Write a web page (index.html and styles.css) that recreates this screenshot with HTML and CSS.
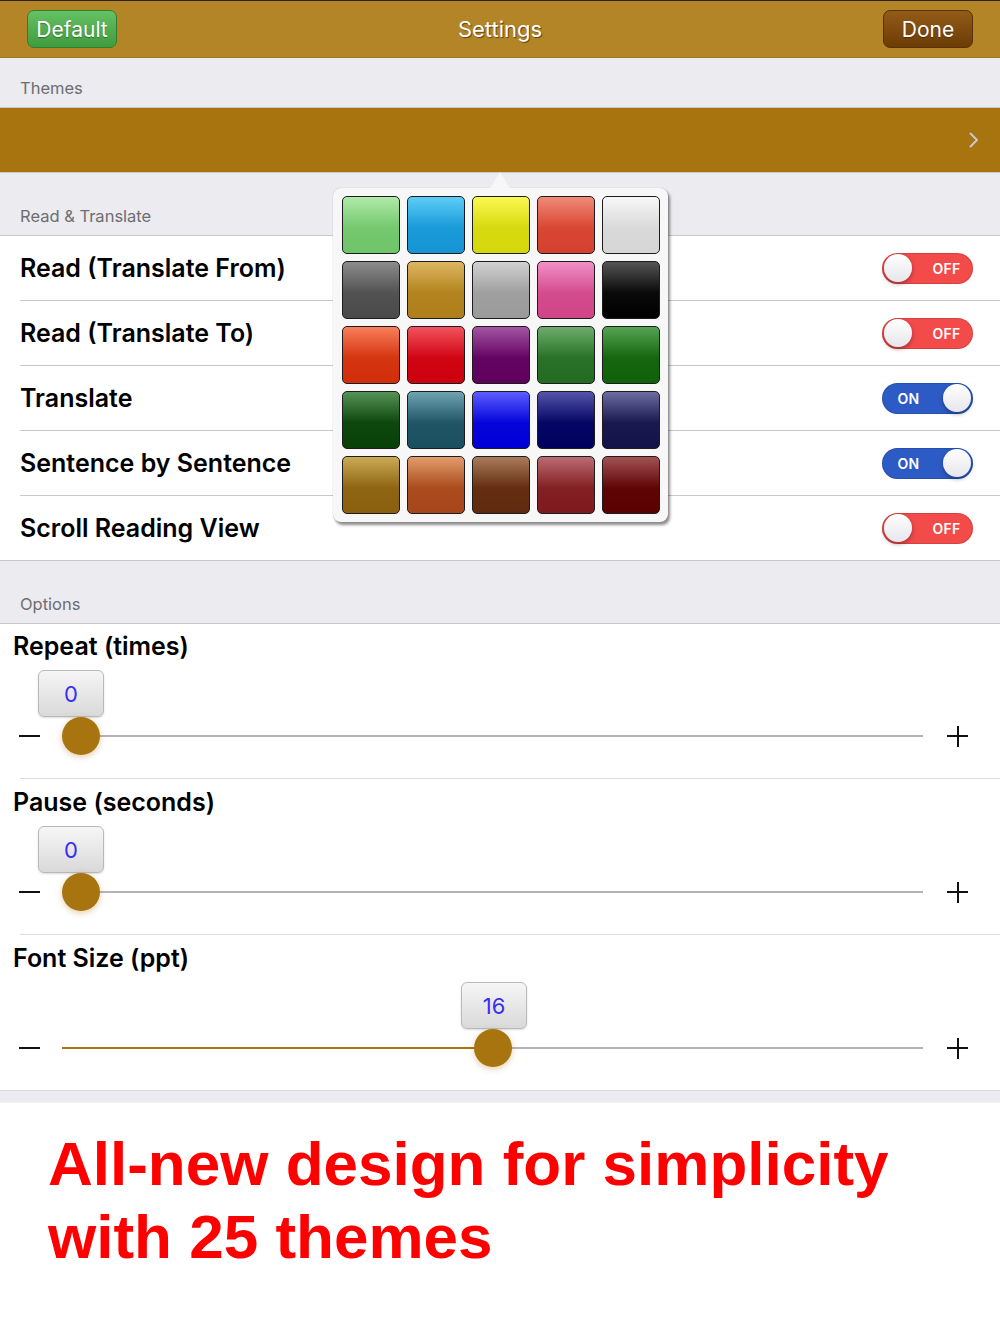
FILE: index.html
```html
<!DOCTYPE html>
<html lang="en">

<head>
  <meta charset="UTF-8">
  <title>Settings</title>
  <meta name="viewport" content="width=device-width, initial-scale=1">
  <link rel="stylesheet" href="styles.css">
</head>

<body>
  <header class="navbar">
    <button class="nav-btn btn-default">Default</button>
    <h1 class="nav-title">Settings</h1>
    <button class="nav-btn btn-done">Done</button>
  </header>

  <main class="settings">
    <div class="group-header">Themes</div>
    <div class="theme-row">
      <svg class="chevron" width="10" height="16" viewBox="0 0 10 16">
        <path d="M1.5 1.5 L8 8 L1.5 14.5" fill="none" stroke="#c9c9ce" stroke-width="2" stroke-linecap="round" stroke-linejoin="round"/>
      </svg>
    </div>

    <div class="group-header tall">Read &amp; Translate</div>
    <ul class="rows">
      <li class="row">
        <span class="row-label">Read (Translate From)</span>
        <span class="switch off"><span class="knob"></span><span class="switch-text">OFF</span></span>
      </li>
      <li class="row">
        <span class="row-label">Read (Translate To)</span>
        <span class="switch off"><span class="knob"></span><span class="switch-text">OFF</span></span>
      </li>
      <li class="row">
        <span class="row-label">Translate</span>
        <span class="switch on"><span class="knob"></span><span class="switch-text">ON</span></span>
      </li>
      <li class="row">
        <span class="row-label">Sentence by Sentence</span>
        <span class="switch on"><span class="knob"></span><span class="switch-text">ON</span></span>
      </li>
      <li class="row">
        <span class="row-label">Scroll Reading View</span>
        <span class="switch off"><span class="knob"></span><span class="switch-text">OFF</span></span>
      </li>
    </ul>

    <div class="group-header tall">Options</div>
    <div class="options">
      <div class="opt">
        <div class="opt-title">Repeat (times)</div>
        <div class="slider">
          <span class="minus"></span>
          <div class="track" style="--p: 0">
            <div class="fill"></div>
            <div class="bubble">0</div>
            <div class="thumb"></div>
          </div>
          <span class="plus"></span>
        </div>
      </div>
      <div class="opt">
        <div class="opt-title">Pause (seconds)</div>
        <div class="slider">
          <span class="minus"></span>
          <div class="track" style="--p: 0">
            <div class="fill"></div>
            <div class="bubble">0</div>
            <div class="thumb"></div>
          </div>
          <span class="plus"></span>
        </div>
      </div>
      <div class="opt last">
        <div class="opt-title">Font Size (ppt)</div>
        <div class="slider">
          <span class="minus"></span>
          <div class="track" style="--p: 0.5">
            <div class="fill"></div>
            <div class="bubble">16</div>
            <div class="thumb"></div>
          </div>
          <span class="plus"></span>
        </div>
      </div>
    </div>

    <div class="footer-band"></div>

    <p class="promo">All-new design for simplicity<br>with 25 themes</p>

    <div class="popover">
      <div class="swatches">
        <span class="swatch c-mint"></span>
        <span class="swatch c-sky"></span>
        <span class="swatch c-lemon"></span>
        <span class="swatch c-coral"></span>
        <span class="swatch c-white"></span>
        <span class="swatch c-graphite"></span>
        <span class="swatch c-gold"></span>
        <span class="swatch c-silver"></span>
        <span class="swatch c-pink"></span>
        <span class="swatch c-black"></span>
        <span class="swatch c-orange"></span>
        <span class="swatch c-red"></span>
        <span class="swatch c-purple"></span>
        <span class="swatch c-green"></span>
        <span class="swatch c-darkgreen"></span>
        <span class="swatch c-forest"></span>
        <span class="swatch c-teal"></span>
        <span class="swatch c-blue"></span>
        <span class="swatch c-navy"></span>
        <span class="swatch c-slate"></span>
        <span class="swatch c-olive"></span>
        <span class="swatch c-copper"></span>
        <span class="swatch c-brown"></span>
        <span class="swatch c-maroon"></span>
        <span class="swatch c-wine"></span>
      </div>
    </div>
  </main>
</body>

</html>
```

FILE: styles.css
```css
* {
  box-sizing: border-box;
}

html {
  font-family: Inter, Roboto, "Liberation Sans", Arial, sans-serif;
  -webkit-font-smoothing: antialiased;
}

body {
  margin: 0;
  width: 1000px;
  background: #fff;
  color: #000;
}

/* nav bar */

.navbar {
  height: 58px;
  border-top: 1px solid #2a2418;
  border-bottom: 1px solid #a07720;
  background: #b38526;
  display: flex;
  align-items: center;
  justify-content: space-between;
  padding: 0 27px;
  position: relative;
}

.nav-title {
  position: absolute;
  left: 0;
  right: 0;
  margin: 0;
  text-align: center;
  font-size: 22px;
  font-weight: 400;
  color: #fff;
  text-shadow: 1px 1px 1px rgba(60, 40, 0, 0.7);
  pointer-events: none;
}

.nav-btn {
  width: 90px;
  height: 38px;
  border-radius: 7px;
  font-family: inherit;
  font-size: 21px;
  color: #fff;
  padding: 0;
  text-shadow: 0 1px 1px rgba(0, 0, 0, 0.35);
  cursor: pointer;
}

.btn-default {
  background: linear-gradient(#66c064, #3f9c3e);
  border: 1px solid #2f7f2e;
}

.btn-done {
  background: linear-gradient(#925b17, #6c3c06);
  border: 1px solid #5b3206;
}

/* groups */

.settings {
  position: relative;
}

.group-header {
  height: 50px;
  background: #ebebf0;
  color: #6d6d72;
  font-size: 16.5px;
  line-height: 20px;
  padding: 0 20px 9px;
  display: flex;
  align-items: flex-end;
  border-bottom: 1px solid #c8c7cc;
}

.group-header.tall {
  height: 63px;
}

.theme-row {
  height: 65px;
  background: #a8740f;
  border-bottom: 1px solid #c8c7cc;
  display: flex;
  align-items: center;
  justify-content: flex-end;
  padding-right: 21px;
}

.rows {
  list-style: none;
  margin: 0;
  padding: 0 0 0 20px;
  border-bottom: 1px solid #c8c7cc;
}

.row {
  height: 65px;
  display: flex;
  align-items: center;
  justify-content: space-between;
  padding-right: 27px;
  border-bottom: 1px solid #c8c7cc;
}

.row:last-child {
  height: 64px;
  border-bottom: 0;
}

.row-label {
  font-size: 25px;
  font-weight: 600;
}

/* switches */

.switch {
  width: 91px;
  height: 31px;
  border-radius: 16px;
  display: flex;
  align-items: center;
  padding: 0 2px;
  box-shadow: inset 0 0 0 1px rgba(0, 0, 0, 0.12);
}

.switch.off {
  background: #f34a4a;
}

.switch.on {
  background: #2c5bc6;
  flex-direction: row-reverse;
}

.knob {
  width: 28px;
  height: 28px;
  border-radius: 50%;
  background: linear-gradient(#ffffff, #e6e6ec);
  box-shadow: 0 2px 4px rgba(0, 0, 0, 0.35);
  flex: none;
}

.switch-text {
  flex: 1;
  text-align: center;
  font-size: 14px;
  font-weight: 600;
  color: #fff;
  letter-spacing: 0.3px;
}

.switch.off .switch-text {
  padding-left: 10px;
}

.switch.on .switch-text {
  padding-right: 10px;
}

/* options */

.opt {
  padding: 9px 0 23px;
  margin-left: 20px;
  border-bottom: 1px solid #dcdce0;
}

.opt:first-child {
  padding-top: 8px;
}

.opt.last {
  border-bottom: 0;
}

.opt-title {
  margin-left: -7px;
  font-size: 25px;
  line-height: 28px;
  font-weight: 600;
}

.slider {
  margin: 10px 0 0 -1px;
  padding-top: 47px;
  display: flex;
  align-items: center;
}

.minus {
  width: 21px;
  height: 2.5px;
  background: #111;
  margin-right: 22px;
}

.plus {
  width: 21px;
  height: 21px;
  margin: 0 32px 0 24px;
  background:
    linear-gradient(#111, #111) center / 21px 2px no-repeat,
    linear-gradient(#111, #111) center / 2px 21px no-repeat;
}

.track {
  flex: 1;
  height: 38px;
  position: relative;
}

.track::before {
  content: "";
  position: absolute;
  left: 0;
  right: 0;
  top: 18px;
  height: 2px;
  background: #b4b4b4;
}

.fill {
  position: absolute;
  left: 0;
  top: 18px;
  height: 2px;
  width: calc(19px + var(--p) * (100% - 38px));
  background: #a8740f;
}

.thumb {
  position: absolute;
  top: 0;
  left: calc(var(--p) * (100% - 38px));
  width: 38px;
  height: 38px;
  border-radius: 50%;
  background: #a8740f;
  box-shadow: 0 2px 6px rgba(168, 116, 15, 0.35);
}

.bubble {
  position: absolute;
  left: calc(-24px + var(--p) * (100% - 15px));
  bottom: 100%;
  width: 66px;
  height: 47px;
  border: 1px solid #b9b9b9;
  border-radius: 6px;
  background: linear-gradient(#f6f6f6, #d9d9d9);
  box-shadow: 0 1px 2px rgba(0, 0, 0, 0.15);
  color: #3a2df2;
  font-size: 22px;
  display: flex;
  align-items: center;
  justify-content: center;
}

.footer-band {
  height: 13px;
  background: #ebebf0;
  border-top: 1px solid #d9d9de;
  border-bottom: 1px solid #f2f2f4;
}

.promo {
  margin: 0;
  padding: 24px 48px 0;
  font-family: "Liberation Sans", Arial, sans-serif;
  font-weight: 700;
  font-size: 62px;
  line-height: 73px;
  color: #ff0000;
}

/* theme popover */

.popover {
  position: absolute;
  top: 130px;
  left: 333px;
  width: 335px;
  padding: 8px 8px 8px 9px;
  background: #f7f7f8;
  border-radius: 8px;
  box-shadow: 2px 3px 3px rgba(0, 0, 0, 0.45), 0 0 1px rgba(0, 0, 0, 0.3);
}

.popover::before {
  content: "";
  position: absolute;
  top: -16px;
  left: 157px;
  border-left: 10px solid transparent;
  border-right: 10px solid transparent;
  border-bottom: 16px solid #f7f7f8;
}

.swatches {
  display: grid;
  grid-template-columns: repeat(5, 58px);
  grid-auto-rows: 58px;
  gap: 7px;
}

.swatch {
  border: 1px solid #1c1c1c;
  border-radius: 5px;
}

.c-mint { background: linear-gradient(#b0eaa8, #74c86f 55%, #6fc56a); }
.c-sky { background: linear-gradient(#5ccdf7, #1a9ad8 55%, #1595d3); }
.c-lemon { background: linear-gradient(#fbf852, #d7da10 55%, #d4d80b); }
.c-coral { background: linear-gradient(#f08a79, #d84733 55%, #d5402e); }
.c-white { background: linear-gradient(#f7f7f7, #d9d9d9 55%, #d6d6d6); }
.c-graphite { background: linear-gradient(#8c8c8c, #525252 55%, #4a4a4a); }
.c-gold { background: linear-gradient(#ddb662, #b3841f 55%, #ae7f1a); }
.c-silver { background: linear-gradient(#d1d1d1, #a0a0a0 55%, #9a9a9a); }
.c-pink { background: linear-gradient(#f190c6, #d44c8e 55%, #d04588); }
.c-black { background: linear-gradient(#555555, #0a0a0a 55%, #000000); }
.c-orange { background: linear-gradient(#f87f5c, #d53510 55%, #d22d0c); }
.c-red { background: linear-gradient(#f2525e, #d00512 55%, #cc000e); }
.c-purple { background: linear-gradient(#a455a4, #640462 55%, #5e005c); }
.c-green { background: linear-gradient(#6dab6d, #297228 55%, #236b22); }
.c-darkgreen { background: linear-gradient(#55a455, #15660f 55%, #10610b); }
.c-forest { background: linear-gradient(#559355, #0e470d 55%, #094209); }
.c-teal { background: linear-gradient(#6ea3b2, #1f5565 55%, #1a4f5f); }
.c-blue { background: linear-gradient(#5d5dff, #0505da 55%, #0000d6); }
.c-navy { background: linear-gradient(#5454aa, #050566 55%, #00005e); }
.c-slate { background: linear-gradient(#6c6ca2, #19194f 55%, #13134a); }
.c-olive { background: linear-gradient(#cbab55, #8f6513 55%, #8a600f); }
.c-copper { background: linear-gradient(#e29c6d, #ab4c1d 55%, #a6461a); }
.c-brown { background: linear-gradient(#a97c5c, #652e13 55%, #5f2a10); }
.c-maroon { background: linear-gradient(#ba6c72, #832024 55%, #7e1a1f); }
.c-wine { background: linear-gradient(#a35355, #5f0505 55%, #590000); }
```
